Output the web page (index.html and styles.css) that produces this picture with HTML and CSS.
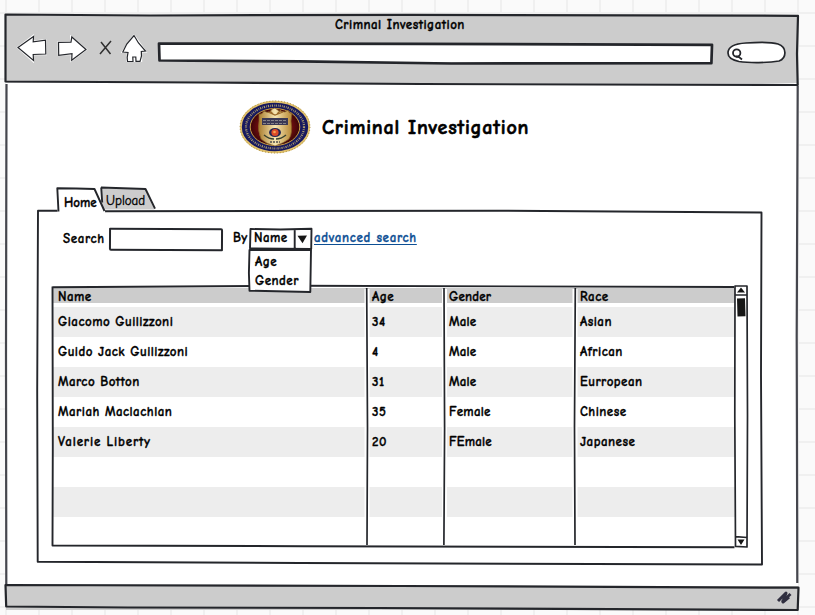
FILE: index.html
```html
<!DOCTYPE html>
<html lang="en">
<head>
<meta charset="utf-8">
<title>Crimnal Investigation</title>
<link rel="stylesheet" href="styles.css">
</head>
<body>
<div class="window">
  <header class="chrome">
    <div class="window-title">Crimnal Investigation</div>
    <div class="toolbar">
      <svg class="nav" viewBox="16 34 132 32" width="132" height="32">
        <g class="halo"><path d="M18 47.5 33 36v5.5l12.5-1.3.3 14L33 54v7Z"/><path d="M58.500 42 71 42.500V37l15 12.500L71.500 60.500l.3-6.500-13 .8Z"/><path d="M134 35.500 145.500 51.500h-4.300V61h-14l.8-9h-5.500Z"/></g>
        <g class="ink"><path d="M18 47.500 33.500 36.500l-.3 5.300 12.300-1.600.3 13.800-12.600.5.3 6Z"/><path d="M58.500 42.300 71 42.200l.8-5.200L86 49.500 71.700 60.300l.3-6.600-13.300 1.600Z"/><path d="M134 35.500 138.500 43 145.500 51l-4.200.5.2 4.500-1.500 5.300h-4l-.2-4.300h-3l.2 4.300-5.500.2-.3-4 .8-5-5.200-.5 4-8Z"/></g>
        <path class="cross" d="M111 41 100 54M101 42l9.500 12"/>
      </svg>
      <div class="address"></div>
      <svg class="find" viewBox="726 40 62 24" width="62" height="24">
        <path class="pill" d="M728 53c0-7 8-9.500 18-10 12-.8 26-.9 32 1 9 3 9 14 1 17-11 2-30 2-40 .5-7-1.500-11-4.500-11-8.500Z"/>
        <circle class="lens" cx="736.700" cy="53" r="3.700"/><path class="lens" d="m736 56.500 3 .5 3 2.500"/>
      </svg>
    </div>
  </header>

  <main class="page">
    <div class="brand">
      <svg class="seal" viewBox="0 0 72 54" width="72" height="54">
        <defs><radialGradient id="red"><stop offset=".4" stop-color="#941414"/><stop offset="1" stop-color="#3c0508"/></radialGradient>
        <linearGradient id="gold"><stop offset="0" stop-color="#a87b2c"/><stop offset=".5" stop-color="#f6e6b2"/><stop offset="1" stop-color="#b68733"/></linearGradient></defs>
        <ellipse cx="36" cy="27" rx="34.200" ry="25.300" fill="#17195f" stroke="#e2c26c" stroke-width="2"/>
        <ellipse cx="36" cy="27" rx="34.900" ry="26" fill="none" stroke="#a58a44" stroke-width="1" stroke-dasharray="1 2"/>
        <ellipse cx="36" cy="27" rx="29" ry="21.500" fill="none" stroke="#a99a6c" stroke-width="2.200" stroke-dasharray="1.200 1.100 .7 1"/>
        <ellipse cx="36" cy="27" rx="24.800" ry="18.500" fill="url(#red)" stroke="#c79d43" stroke-width="1"/>
        <path d="M20 14q3 1 5-3 3 2 6 1l2-3 3-1 4 3 6 1 3-2q1 4 4 3l-1 8q2 12-2 18-5 4-14 7-9-2-14-7-4-9-2-18Z" fill="url(#gold)" stroke="#7e5a23" stroke-width=".7"/>
        <path d="M29 12 36 15 44 12M31 11l3 3M42 10l-4 4" fill="none" stroke="#9b6a29" stroke-width="1.200"/>
        <path d="M23 18h26v7H23Z" fill="#3b3a55"/><path d="M24 20.500h24M24 23.500h24" stroke="#858389" stroke-width="1" stroke-dasharray="3 1"/>
        <ellipse cx="36" cy="32.500" rx="6" ry="4.500" fill="#252753"/><circle cx="36" cy="32.500" r="3.600" fill="#dc4b28"/><circle cx="35.500" cy="32" r="1.300" fill="#f5a451"/>
        <path d="M25 35q5 4 10 4M47 35q-5 4-10 4" fill="none" stroke="#35402e" stroke-width="1.500"/><path d="M31 42h10" stroke="#52504d" stroke-width="1.500" stroke-dasharray="2 1"/>
      </svg>
      <h1>Criminal Investigation</h1>
    </div>

    <nav class="tabs">
      <svg class="lines" viewBox="50 184 112 32"><path class="flat" fill="#ccc" d="m101 188 44.500 1.500L154.500 209.500l-52 0Z"/><path d="m101 187.500 44.500 1.500L155 208.700M101.200 187.500l1 15"/><path class="flat" fill="#fff" d="M58 213 57.300 188l37.200 1L105 211.500v2Z"/><path d="M58.500 211.500 57.300 188.200 76 188.500l18.500.5L104.500 211"/></svg>
      <a class="tab home">Home</a><a class="tab upload">Upload</a>
    </nav>

    <section class="panel">
      <form class="search">
        <label class="lab-search">Search</label>
        <span class="field"></span>
        <label class="lab-by">By</label>
        <div class="combo">
          <span class="value">Name</span>
          <ul class="menu">
            <svg class="lines" viewBox="246 248 68 48"><path fill="#fff" d="m249.500 250-.6 23 .6 17.700 60.800 1.300.7-42Z"/></svg>
            <li>Age</li><li>Gender</li>
          </ul>
          <svg class="lines" viewBox="248 226 66 24"><path d="m250.500 229 30 .5 31-.7-.3 20.200-61.200-.7ZM294.700 229v19.500"/><path class="solid" d="m297.500 235.800 9.500-.3-4.500 7.700Z"/></svg>
        </div>
        <a class="advanced">advanced search</a>
      </form>

      <div class="grid">
        <div class="table">
          <div class="row head"><span>Name</span><span>Age</span><span>Gender</span><span>Race</span></div>
          <div class="row"><span>Giacomo Guilizzoni</span><span>34</span><span>Male</span><span>Asian</span></div>
          <div class="row"><span>Guido Jack Guilizzoni</span><span>4</span><span>Male</span><span>African</span></div>
          <div class="row"><span>Marco Botton</span><span>31</span><span>Male</span><span>Eurropean</span></div>
          <div class="row"><span>Mariah Maclachlan</span><span>35</span><span>Female</span><span>Chinese</span></div>
          <div class="row"><span class="wide">Valerie Liberty</span><span>20</span><span>FEmale</span><span>Japanese</span></div>
          <div class="row"><span></span><span></span><span></span><span></span></div>
          <div class="row"><span></span><span></span><span></span><span></span></div>
          <div class="row"><span></span><span></span><span></span><span></span></div>
        </div>
        <svg class="lines" viewBox="50 284 700 266">
          <path class="gap" d="M367 289v256M444.500 289v256M575 289v256"/>
          <path class="flat" fill="#fff" d="M735 287h12v260h-12Z"/>
          <path class="thin" d="m366.700 288 .8 140-.5 117M444 288l.6 140-.7 117M575.300 288l-.8 140 .5 117"/>
          <path d="M52.500 287.200 300 285.800l434 1.200M52.500 286.500l.3 160-.3 99 250 .7 432 1.100"/>
          <path class="thin" d="M735 286h12l.5 130-.5 131-11.500-.6-.7-130ZM735 295h12M735.500 536.700l11.500.8"/>
          <path class="solid" d="m737 292.500 4-5 4 5ZM737.500 539.500h7L741 545ZM737 298.500l8-.2.500 18-8 .2Z"/>
        </svg>
      </div>
      <svg class="lines frame" viewBox="34 208 732 360"><path d="M57.500 210.800H38l-.8 180 .5 171L300 563l462 1.500-1-190 .5-162L500 210.700l-395 .5"/></svg>
    </section>
  </main>

  <footer class="status"></footer>
  <svg class="lines outline" viewBox="0 8 804 606">
    <path class="soft" d="m6.500 84-.5 270 .3 230M797.700 86l-1 250 .6 247"/>
    <path d="M5.500 14.500 150 15.500l260-.7 388 1-1 38 .7 31.200L420 84 200 82.500 5.500 81.500ZM5.500 585 400 586l398.500 1.700-.8 22.300-420-2-250-.5-121.500-1Z"/>
    <path d="m159 43.500 260 .3 293 1-.6 18.400-260 .3L300 61.300l-140.500-.8Z" class="bar"/>
    <path class="grip" d="m778 601 8-8-3 9 6-5"/><path class="grip" d="m782 602 8.500-8"/>
  </svg>
</div>
</body>
</html>
```
FILE: styles.css
```css
* { box-sizing: border-box; }
body {
  margin: 0; width: 815px; height: 615px; overflow: hidden;
  background-color: #fafafa;
  background-image:
    linear-gradient(90deg, #f0f0f0 2px, transparent 2px),
    linear-gradient(#f0f0f0 2px, transparent 2px);
  background-size: 33px 33px;
  background-position: 5px 0, 0 12px;
  font: bold 13px/18px "Chalkboard", "Comic Neue", Lato, sans-serif;
  letter-spacing: .48px;
  -webkit-text-stroke: .32px currentColor;
  color: #000;
  padding: 15px 0 0 6px;
}
.window { position: relative; width: 792px; height: 595px; display: flex; flex-direction: column; background: #fff; }
.lines { position: absolute; fill: none; stroke: #24262b; stroke-width: 1.900; stroke-linejoin: round; pointer-events: none; }
.outline { left: -6px; top: -7px; width: 804px; height: 606px; stroke-width: 2.200; }
.outline .soft { stroke: #45464d; }
.outline .bar { stroke-width: 2.700; }
.outline .grip { stroke-width: 3; stroke: #302f40; }
.lines .solid { fill: #161616; stroke: none; }
.lines .flat { stroke: none; }

.chrome { height: 68px; background: #ccc; flex: none; }
.window-title { height: 18px; padding: 1px 0 0 329px; white-space: nowrap; }
.toolbar { display: flex; height: 34px; }
.nav { margin: 1px 0 0 10px; }
.halo { fill: #fff; stroke: #fff; stroke-width: 2; }
.ink { fill: #fff; stroke: #24262b; stroke-width: 1.200; }
.cross { fill: none; stroke: #303030; stroke-width: 1.500; }
.address { width: 552px; height: 18px; margin: 11px 0 0 12px; background: #fff; }
.find { margin: 7px 0 0 14px; }
.pill { fill: #fff; stroke: #24262b; stroke-width: 1.700; }
.lens { fill: none; stroke: #24262b; stroke-width: 1.800; }

.page { flex: 1; padding: 17px 31px 0; }
.brand { display: flex; align-items: center; height: 54px; padding-left: 202px; }
h1 { margin: 2px 0 0 11px; font-size: 20px; line-height: 26px; letter-spacing: .82px; -webkit-text-stroke-width: .6px; white-space: nowrap; }
.tabs { position: relative; display: flex; height: 28px; margin-top: 30px; padding-left: 20px; }
.tabs .lines { left: 13px; top: 0; width: 112px; height: 32px; z-index: 1; }
.tab { position: relative; z-index: 2; letter-spacing: 0; }
.home { width: 42px; padding: 10px 0 0 7px; }
.upload { padding: 8px 0 0 7px; font-weight: normal; -webkit-text-stroke-width: .35px; }
.panel { position: relative; height: 353px; padding: 15px 0 0 15px; }
.frame { left: -3px; top: -4px; width: 732px; height: 360px; }
.search { display: flex; height: 58px; }
.lab-search { width: 57px; padding: 3px 0 0 11px; letter-spacing: .65px; }
.field { width: 114px; height: 23px; margin-top: 1px; border: 2px solid #24262b; border-radius: 1px 2px; transform: rotate(.3deg); }
.lab-by { width: 26px; padding: 2px 0 0 10px; letter-spacing: .2px; }
.combo { position: relative; width: 62px; }
.combo .value { display: block; padding: 2px 0 0 5px; }
.combo > .lines { left: -1px; top: -1px; width: 66px; height: 24px; }
.menu { position: absolute; z-index: 3; left: 0; top: 25px; margin: 0; padding: 0 0 0 6px; list-style: none; line-height: 19px; }
.menu .lines { left: -3px; top: -4px; width: 68px; height: 48px; }
.menu li { position: relative; }
.advanced { padding: 2px 0 0 3px; color: #0d4f94; letter-spacing: .68px; text-decoration: underline; text-underline-offset: 2px; white-space: nowrap; }

.grid { position: relative; width: 696px; height: 262px; padding-top: 3px; }
.grid > .lines { left: -2px; top: -1px; width: 700px; height: 266px; }
.grid .gap { stroke: #fff; stroke-width: 5; }
.lines .thin { stroke-width: 1.700; }
.table { width: 683px; }
.row { display: grid; grid-template-columns: 314px 77px 131px 155px; height: 30px; align-items: center; padding-left: 6px; white-space: nowrap; }
.row span:nth-child(3) { letter-spacing: .2px; }
.row .wide { letter-spacing: .83px; }
.row:nth-child(even) { background: #ededed; }
.row.head { height: 15px; background: #ccc; margin-bottom: 4px; }
.row:last-child { height: 28px; }
.status { flex: none; height: 24px; background: #ccc; }
```
